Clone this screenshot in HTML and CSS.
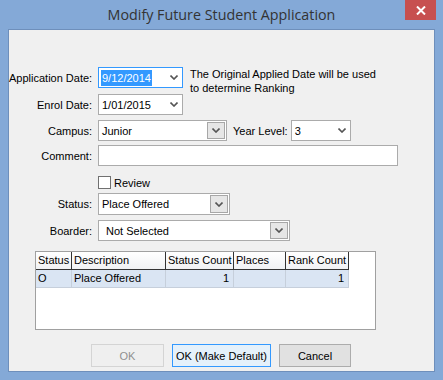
FILE: index.html
```html
<!DOCTYPE html>
<html>
<head>
<meta charset="utf-8">
<link rel="stylesheet" href="styles.css">
</head>
<body>
<div class="window">
  <div class="titlebar">
    <span></span>
    <span class="title">Modify Future Student Application</span>
    <span class="close-wrap"><span class="close"><svg width="10" height="9" viewBox="0 0 10 9"><path d="M1 0.5 L9 8.5 M9 0.5 L1 8.5" stroke="#fff" stroke-width="2"/></svg></span></span>
  </div>
  <div class="client">
    <div class="row r1">
      <label class="lbl">Application Date:</label>
      <div class="box date focus"><span class="sel">9/12/2014</span><svg class="chev" width="8" height="5" viewBox="0 0 8 5"><path d="M0.5 0.5 L4 4 L7.5 0.5" stroke="#555" stroke-width="1.6" fill="none"/></svg></div>
      <div class="info">The Original Applied Date will be used<br>to determine Ranking</div>
    </div>
    <div class="row r2">
      <label class="lbl">Enrol Date:</label>
      <div class="box date"><span class="val">1/01/2015</span><svg class="chev" width="8" height="5" viewBox="0 0 8 5"><path d="M0.5 0.5 L4 4 L7.5 0.5" stroke="#555" stroke-width="1.6" fill="none"/></svg></div>
    </div>
    <div class="row r3">
      <label class="lbl">Campus:</label>
      <div class="box combo campus"><span class="val">Junior</span><span class="btn"><svg width="8" height="5" viewBox="0 0 8 5"><path d="M0.5 0.5 L4 4 L7.5 0.5" stroke="#555" stroke-width="1.6" fill="none"/></svg></span></div>
      <label class="lbl2">Year Level:</label>
      <div class="box date year"><span class="val">3</span><svg class="chev" width="8" height="5" viewBox="0 0 8 5"><path d="M0.5 0.5 L4 4 L7.5 0.5" stroke="#555" stroke-width="1.6" fill="none"/></svg></div>
    </div>
    <div class="row r4">
      <label class="lbl">Comment:</label>
      <div class="box comment"></div>
    </div>
    <div class="row r5">
      <span class="lbl"></span>
      <span class="check"></span><span class="checklbl">Review</span>
    </div>
    <div class="row r6">
      <label class="lbl">Status:</label>
      <div class="box combo status"><span class="val">Place Offered</span><span class="btn"><svg width="8" height="5" viewBox="0 0 8 5"><path d="M0.5 0.5 L4 4 L7.5 0.5" stroke="#555" stroke-width="1.6" fill="none"/></svg></span></div>
    </div>
    <div class="row r7">
      <label class="lbl">Boarder:</label>
      <div class="box combo boarder"><span class="val wide">Not Selected</span><span class="btn"><svg width="8" height="5" viewBox="0 0 8 5"><path d="M0.5 0.5 L4 4 L7.5 0.5" stroke="#555" stroke-width="1.6" fill="none"/></svg></span></div>
    </div>
    <div class="grid">
      <div class="thead">
        <div class="th c1">Status</div>
        <div class="th c2">Description</div>
        <div class="th c3">Status Count</div>
        <div class="th c4">Places</div>
        <div class="th c5">Rank Count</div>
      </div>
      <div class="trow">
        <div class="td c1">O</div>
        <div class="td c2">Place Offered</div>
        <div class="td c3 num">1</div>
        <div class="td c4"></div>
        <div class="td c5 num">1</div>
      </div>
    </div>
    <div class="buttons">
      <button class="b disabled">OK</button>
      <button class="b default">OK (Make Default)</button>
      <button class="b">Cancel</button>
    </div>
  </div>
</div>
</body>
</html>
```

FILE: styles.css
```css
html, body {
  margin: 0;
  padding: 0;
}
body {
  width: 443px;
  height: 380px;
  overflow: hidden;
  background: #84a9d7;
  font-family: "Liberation Sans", Arial, sans-serif;
  font-size: 11px;
  color: #000;
}
.window {
  width: 443px;
  height: 380px;
  display: flex;
  flex-direction: column;
  background: #84a9d7;
}
.titlebar {
  height: 29px;
  display: grid;
  grid-template-columns: 1fr auto 1fr;
  padding: 0 7px;
  flex-shrink: 0;
}
.title {
  font-family: "Open Sans", "Noto Sans", sans-serif;
  font-size: 14.3px;
  color: #333;
  line-height: 29px;
  white-space: nowrap;
}
.close-wrap {
  display: flex;
  justify-content: flex-end;
  align-items: flex-start;
}
.close {
  width: 31px;
  height: 20px;
  background: #c75050;
  display: flex;
  align-items: center;
  justify-content: center;
}
.client {
  flex: 1;
  margin: 0 8px 8px 8px;
  border: 1px solid #6e8fbb;
  background: #f0f0f0;
  display: flex;
  flex-direction: column;
  padding-top: 37px;
}
.row {
  display: flex;
  align-items: center;
  height: 21px;
}
.r2 { margin-top: 6px; }
.r3 { margin-top: 5px; }
.r4 { margin-top: 4px; }
.r5 { margin-top: 8px; height: 17px; }
.r6 { margin-top: 2px; height: 22px; }
.r7 { margin-top: 5px; }
.lbl {
  width: 83px;
  text-align: right;
  margin-right: 6px;
  flex-shrink: 0;
  white-space: nowrap;
}
.box {
  box-sizing: border-box;
  height: 100%;
  border: 1px solid #ababab;
  background: #fff;
  display: flex;
  align-items: center;
  position: relative;
}
.date {
  width: 85px;
  padding-left: 2px;
  justify-content: space-between;
  padding-right: 4px;
}
.date.focus {
  border-color: #3399ff;
}
.sel {
  background: #3399ff;
  color: #fff;
  padding: 1px 1px;
  line-height: 14px;
}
.val {
  padding-left: 1px;
}
.chev {
  flex-shrink: 0;
}
.info {
  margin-left: 7px;
  line-height: 14px;
  color: #000;
  align-self: flex-start;
  margin-top: 0px;
}
.combo {
  justify-content: space-between;
  padding-left: 2px;
  padding-right: 1px;
}
.campus { width: 129px; }
.status { width: 132px; }
.boarder { width: 192px; }
.val.wide { padding-left: 5px; }
.btn {
  box-sizing: border-box;
  width: 18px;
  height: calc(100% - 2px);
  border: 1px solid #a7a7a7;
  background: #e6e6e6;
  display: flex;
  align-items: center;
  justify-content: center;
}
.lbl2 {
  margin-left: 6px;
  margin-right: 3px;
  white-space: nowrap;
}
.year {
  width: 60px;
}
.comment {
  width: 300px;
}
.check {
  box-sizing: border-box;
  width: 13px;
  height: 13px;
  border: 1px solid #707070;
  background: #fff;
}
.checklbl {
  margin-left: 3px;
}
.grid {
  box-sizing: border-box;
  margin-top: 10px;
  margin-left: 26px;
  width: 341px;
  height: 79px;
  border: 1px solid #a0a0a0;
  background: #fff;
  padding-top: 0;
}
.thead, .trow {
  display: flex;
}
.thead {
  height: 18px;
}
.th {
  box-sizing: border-box;
  height: 18px;
  line-height: 17px;
  padding-left: 2px;
  background: linear-gradient(#ffffff, #f1f2f4);
  border-right: 1px solid #333;
  border-bottom: 1px solid #333;
  white-space: nowrap;
  overflow: hidden;
}
.trow {
  height: 18px;
}
.td {
  box-sizing: border-box;
  height: 18px;
  line-height: 17px;
  padding: 0 2px;
  background: #dae5f3;
  border-right: 1px solid #c6cfdb;
  border-bottom: 1px solid #c6cfdb;
  white-space: nowrap;
}
.c1 { width: 36px; }
.c2 { width: 94px; }
.c3 { width: 68px; }
.c4 { width: 52px; }
.c5 { width: 63px; }
.num { text-align: right; padding-right: 4px; }
.buttons {
  display: flex;
  margin-top: 14px;
  margin-left: 82px;
  gap: 8px;
}
.b {
  box-sizing: border-box;
  height: 23px;
  border: 1px solid #acacac;
  background: #e1e1e1;
  font-family: "Liberation Sans", Arial, sans-serif;
  font-size: 11px;
  color: #000;
  padding: 0;
  margin: 0;
}
.b.disabled {
  width: 73px;
  border-color: #d4d4d4;
  background: #efefef;
  color: #8f8f8f;
}
.b.default {
  width: 99px;
  border-color: #3399ff;
  background: #e5f1fb;
}
.b:last-child {
  width: 72px;
}
```
